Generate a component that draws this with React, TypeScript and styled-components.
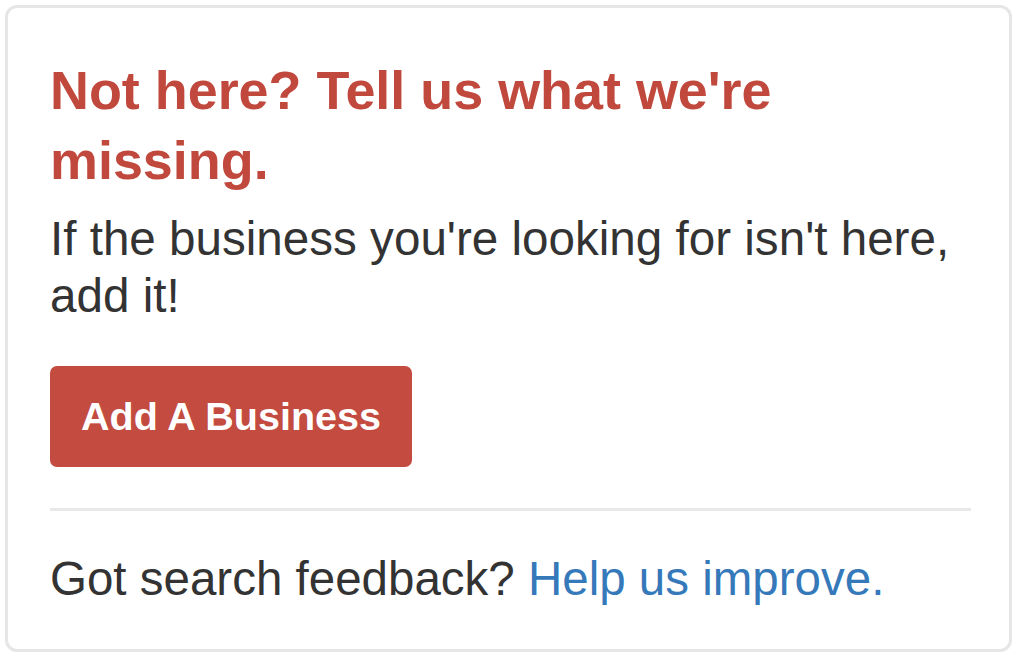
import React from 'react';
import styled, { createGlobalStyle } from 'styled-components';

const GlobalStyle = createGlobalStyle`
  html, body {
    margin: 0;
    padding: 0;
    background: #fff;
  }

  body {
    font-family: 'Liberation Sans', Arial, Helvetica, sans-serif;
    color: #333;
  }
`;

const StyledCard = styled.section`
  box-sizing: border-box;
  width: 1007px;
  height: 647px;
  margin: 5px;
  padding: 47px 38px 0 42px;
  border: 3px solid #e6e6e6;
  border-radius: 12px;
  display: flex;
  flex-direction: column;
`;

const StyledTitle = styled.h3`
  margin: 0;
  font-size: 53.9px;
  font-weight: 700;
  line-height: 70px;
  color: #c1483d;
`;

const StyledText = styled.p`
  margin: 15px 0 0;
  font-size: 47.6px;
  line-height: 57px;
  color: #333;
`;

const StyledButton = styled.button`
  align-self: flex-start;
  box-sizing: border-box;
  height: 101px;
  margin-top: 42px;
  padding: 0 31px;
  border: none;
  border-radius: 7px;
  background-color: #c34b40;
  color: #fff;
  font-family: inherit;
  font-size: 39.5px;
  font-weight: 700;
  cursor: pointer;
`;

const StyledDivider = styled.hr`
  margin: 41px 0 0;
  border: none;
  border-top: 3px solid #e8e8e8;
`;

const StyledFooter = styled.p`
  margin: 39px 0 0;
  font-size: 47.5px;
  line-height: 57px;
  color: #333;
`;

const StyledLink = styled.a`
  color: #3579ba;
  text-decoration: none;
`;

export default function App() {
  return (
    <>
      <GlobalStyle />
      <StyledCard>
        <StyledTitle>Not here? Tell us what we're missing.</StyledTitle>
        <StyledText>If the business you're looking for isn't here, add it!</StyledText>
        <StyledButton type="button">Add A Business</StyledButton>
        <StyledDivider />
        <StyledFooter>
          Got search feedback? <StyledLink href="#">Help us improve.</StyledLink>
        </StyledFooter>
      </StyledCard>
    </>
  );
}
